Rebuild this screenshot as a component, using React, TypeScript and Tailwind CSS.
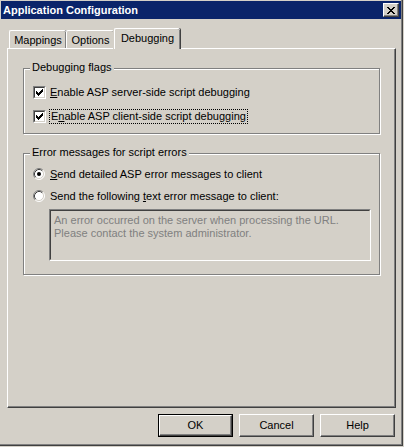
import React from "react";

// Classic Windows dialog: "Application Configuration", Debugging tab.
const FONT = "font-['Liberation_Sans',Arial,sans-serif]";

function CheckMark() {
  // 7x7 pixel check glyph
  const rows: [number, number, number][] = [
    [0, 6, 1],
    [1, 5, 2],
    [2, 0, 1],
    [2, 4, 3],
    [3, 0, 2],
    [3, 3, 3],
    [4, 0, 5],
    [5, 1, 3],
    [6, 2, 1],
  ];
  return (
    <svg width="7" height="7" viewBox="0 0 7 7" shapeRendering="crispEdges">
      {rows.map(([y, x, w], i) => (
        <rect key={i} x={x} y={y} width={w} height={1} fill="#000" />
      ))}
    </svg>
  );
}

function Checkbox({ checked }: { checked: boolean }) {
  return (
    <span className="flex h-[13px] w-[13px] shrink-0 border border-t-[#808080] border-l-[#808080] border-r-white border-b-white">
      <span className="flex flex-1 items-center justify-center border border-t-[#404040] border-l-[#404040] border-r-[#d4d0c8] border-b-[#d4d0c8] bg-white">
        {checked ? <CheckMark /> : null}
      </span>
    </span>
  );
}

function Radio({ checked }: { checked: boolean }) {
  return (
    <svg width="12" height="12" viewBox="0 0 12 12" className="shrink-0">
      <circle cx="6" cy="6" r="5" fill="#fff" />
      <path d="M2.11 9.89 A5.5 5.5 0 0 1 9.89 2.11" fill="none" stroke="#808080" strokeWidth="1" />
      <path d="M9.89 2.11 A5.5 5.5 0 0 1 2.11 9.89" fill="none" stroke="#fff" strokeWidth="1" />
      <path d="M2.82 9.18 A4.5 4.5 0 0 1 9.18 2.82" fill="none" stroke="#404040" strokeWidth="1" />
      <path d="M9.18 2.82 A4.5 4.5 0 0 1 2.82 9.18" fill="none" stroke="#d4d0c8" strokeWidth="1" />
      {checked ? <circle cx="6" cy="6" r="2" fill="#000" /> : null}
    </svg>
  );
}

function GroupBox({
  title,
  className,
  children,
}: {
  title: string;
  className: string;
  children: React.ReactNode;
}) {
  return (
    <div
      className={`relative w-[357px] border border-[#808080] shadow-[inset_1px_1px_0_#fff,1px_1px_0_#fff] ${className}`}
    >
      <span className="absolute -top-[8px] left-[6px] bg-[#d4d0c8] px-[2px] leading-[13px]">
        {title}
      </span>
      {children}
    </div>
  );
}

function Tab({ label, selected }: { label: string; selected?: boolean }) {
  return (
    <div
      className={
        selected
          ? "relative z-10 -mb-px flex h-[21px] w-[66px] items-start justify-center rounded-t-[2px] border-t border-l border-t-white border-l-white bg-[#d4d0c8] pt-[3px] shadow-[-1px_0_0_#d4d0c8,inset_-1px_0_0_#808080,1px_0_0_#404040]"
          : "flex h-[18px] items-start justify-center rounded-t-[2px] border-t border-l border-t-white border-l-white pt-[3px] shadow-[inset_-1px_0_0_#808080,1px_0_0_#404040]"
      }
    >
      {label}
    </div>
  );
}

function Button({ label, isDefault }: { label: string; isDefault?: boolean }) {
  return (
    <div className={`h-[23px] w-[75px] ${isDefault ? "border border-black" : ""}`}>
      <div className="flex h-full w-full items-center justify-center border border-t-white border-l-white border-r-[#404040] border-b-[#404040] shadow-[inset_-1px_-1px_0_#808080]">
        {label}
      </div>
    </div>
  );
}

export default function App() {
  return (
    <div className={`h-[447px] w-[404px] bg-[#d4d0c8] text-[11px] leading-[13px] text-black ${FONT}`}>
      <div className="flex h-[446px] w-[403px] flex-col border-r border-b border-r-[#404040] border-b-[#404040] shadow-[inset_-1px_-1px_0_#808080]">
        {/* title bar */}
        <div className="mt-px ml-px flex h-[18px] w-[400px] items-center justify-between bg-[#0a246a] pr-[2px] pl-[2px]">
          <span className="text-[11px] font-bold text-white">Application Configuration</span>
          <div className="flex h-[14px] w-[16px] items-center justify-center border border-t-white border-l-white border-r-[#404040] border-b-[#404040] bg-[#d4d0c8] shadow-[inset_-1px_-1px_0_#808080]">
            <svg width="8" height="7" viewBox="0 0 8 7" shapeRendering="crispEdges">
              <path
                d="M0 0h2v1h-2zM6 0h2v1h-2zM1 1h2v1h-2zM5 1h2v1h-2zM2 2h4v1h-4zM3 3h2v1h-2zM2 4h4v1h-4zM1 5h2v1h-2zM5 5h2v1h-2zM0 6h2v1h-2zM6 6h2v1h-2z"
                fill="#000"
              />
            </svg>
          </div>
        </div>

        {/* tab strip */}
        <div className="mt-[9px] ml-[9px] flex h-[20px] items-end">
          <div className="w-[57px]">
            <Tab label="Mappings" />
          </div>
          <div className="w-[48px]">
            <Tab label="Options" />
          </div>
          <Tab label="Debugging" selected />
        </div>

        {/* tab page */}
        <div className="ml-[7px] flex h-[360px] w-[389px] flex-col border border-t-white border-l-white border-r-[#404040] border-b-[#404040] pt-[19px] pl-[15px] shadow-[inset_-1px_-1px_0_#808080]">
          <GroupBox title="Debugging flags" className="h-[66px] pt-[11px] pl-[9px]">
            <div className="flex h-[24px] items-center gap-[4px]">
              <Checkbox checked />
              <span>
                <span className="underline underline-offset-1">E</span>nable ASP server-side script debugging
              </span>
            </div>
            <div className="flex h-[24px] items-center gap-[3px]">
              <Checkbox checked />
              <span className="border border-dotted border-black px-px">
                E<span className="underline underline-offset-1">n</span>able ASP client-side script debugging
              </span>
            </div>
          </GroupBox>

          <GroupBox title="Error messages for script errors" className="mt-[19px] h-[122px] pt-[9px] pl-[9px]">
            <div className="flex h-[22px] items-center gap-[5px]">
              <Radio checked />
              <span>
                <span className="underline underline-offset-1">S</span>end detailed ASP error messages to client
              </span>
            </div>
            <div className="flex h-[22px] items-center gap-[5px]">
              <Radio checked={false} />
              <span>
                Send the following <span className="underline underline-offset-1">t</span>ext error message to client:
              </span>
            </div>
            <div className="mt-[2px] ml-[16px] h-[52px] w-[322px] border border-t-[#808080] border-l-[#808080] border-r-white border-b-white">
              <div className="h-full w-full border border-t-[#404040] border-l-[#404040] border-r-[#d4d0c8] border-b-[#d4d0c8] px-[3px] pt-[3px] text-[#808080]">
                An error occurred on the server when processing the URL.
                <br />
                Please contact the system administrator.
              </div>
            </div>
          </GroupBox>
        </div>

        {/* dialog buttons */}
        <div className="mt-[6px] mr-[7px] flex justify-end gap-[6px]">
          <Button label="OK" isDefault />
          <Button label="Cancel" />
          <Button label="Help" />
        </div>
      </div>
    </div>
  );
}
